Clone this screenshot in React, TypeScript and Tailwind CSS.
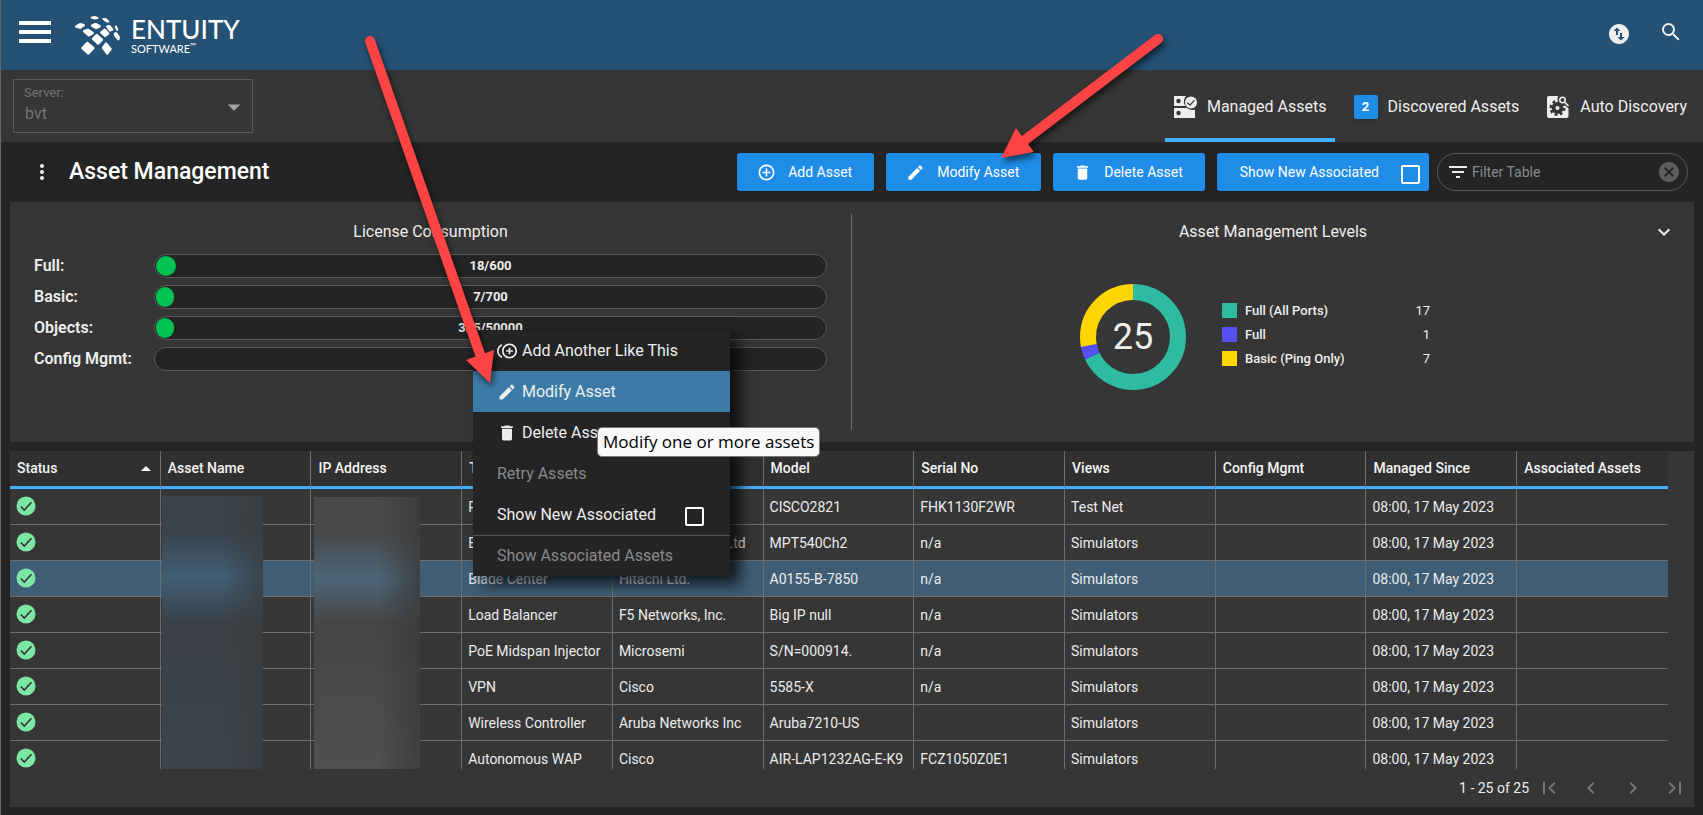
import React from "react";
import {
  MdAddCircleOutline,
  MdArrowDropDown,
  MdArrowDropUp,
  MdCancel,
  MdChevronLeft,
  MdChevronRight,
  MdControlPointDuplicate,
  MdDelete,
  MdEdit,
  MdExpandMore,
  MdFilterList,
  MdFirstPage,
  MdLastPage,
  MdMoreVert,
  MdSearch,
  MdSwapVerticalCircle,
} from "react-icons/md";

function LogoMark() {
  return (
    <svg viewBox="222 42 142 124" className="h-[41px] w-[47px]" aria-hidden="true">
      <g fill="#fff" stroke="#fff" strokeWidth="8" strokeLinejoin="round">
        <path d="M229 77 L240 70 L251 73 L240 80Z" />
        <path d="M275 50 L284 48 L293 51 L285 53Z" strokeWidth="6" />
        <path d="M311 54 L319 55 L326 62 L320 61Z" strokeWidth="6" />
        <path d="M277 74 L287 70 L299 76 L289 81Z" />
        <path d="M253 91 L264 87 L278 97 L267 103Z" />
        <path d="M323 77 L329 76 L337 86 L331 88Z" />
        <path d="M305 95 L315 87 L325 98 L316 105Z" />
        <path d="M347 77 L350 76 L354 87 L352 88Z" strokeWidth="4" />
        <path d="M280 114 L291 103 L306 117 L295 128Z" />
        <path d="M345 98 L350 97 L358 109 L356 116 L346 104Z" strokeWidth="6" />
        <path d="M248 142 L262 127 L280 142 L265 158Z" />
        <path d="M310 141 L319 129 L332 145 L323 158Z" />
      </g>
    </svg>
  );
}

function ManagedIcon() {
  return (
    <svg viewBox="0 0 24 24" className="size-6" aria-hidden="true">
      <path fill="#eee" d="M1 1H13A7.500 7.500 0 0 0 12.500 11H1ZM1 13H14A8 8 0 0 0 22 14.500V23H1Z" />
      <circle cx="5.500" cy="6" r="2.200" fill="#363636" />
      <circle cx="5.500" cy="18" r="2.200" fill="#363636" />
      <circle cx="18" cy="7.500" r="6" fill="#eee" />
      <path d="M14.500 7.800 L17 10.200 L21.500 5.200" fill="none" stroke="#363636" strokeWidth="1.200" />
    </svg>
  );
}

function AutoIcon() {
  return (
    <svg viewBox="0 0 24 24" className="size-6" aria-hidden="true">
      <path
        fill="#eee"
        d="M3 1H12A6 6 0 0 0 18 9.500L22.500 13.500V21A2 2 0 0 1 20.500 23H3A2 2 0 0 1 1 21V3A2 2 0 0 1 3 1Z"
      />
      <circle cx="11.500" cy="13" r="4" fill="none" stroke="#363636" strokeWidth="4" />
      <circle cx="11.500" cy="13" r="6.800" fill="none" stroke="#363636" strokeWidth="2.600" strokeDasharray="2.900 2.440" />
      <circle cx="16.500" cy="5" r="2.700" fill="none" stroke="#eee" strokeWidth="1.500" />
      <path d="M18.500 7 L22.500 11" stroke="#eee" strokeWidth="1.700" />
    </svg>
  );
}

function OkIcon() {
  return (
    <svg viewBox="0 0 20 20" className="size-5" role="img" aria-label="OK">
      <circle cx="10" cy="10" r="9.500" fill="#7ce6a4" />
      <path d="M4.800 10.500 L8.300 14 L15.500 6.200" fill="none" stroke="#363636" strokeWidth="1.600" />
    </svg>
  );
}

const buttonStyle =
  "flex h-[38px] items-center gap-3 rounded-[3px] bg-[#1f8ce8] pr-[22px] pl-5 text-[14px] text-white shadow";

const licenses = [
  { name: "Full", label: "18/600", fill: "w-5" },
  { name: "Basic", label: "7/700", fill: "w-[18px]" },
  { name: "Objects", label: "325/50000", fill: "w-[18px]" },
  { name: "Config Mgmt", label: "", fill: "" },
];

const levels = [
  { name: "Full (All Ports)", count: 17, swatch: "bg-[#2dbba2]", color: "#2dbba2" },
  { name: "Full", count: 1, swatch: "bg-[#5450f4]", color: "#5450f4" },
  { name: "Basic (Ping Only)", count: 7, swatch: "bg-[#ffd603]", color: "#ffd603" },
];

function Donut() {
  const total = levels.reduce((sum, l) => sum + l.count, 0);
  let start = 0;
  return (
    <svg viewBox="0 0 106 106" className="mt-1 size-[106px]" role="img" aria-label="Asset management levels">
      <g transform="rotate(-90 53 53)">
        {levels.map((l) => {
          const offset = start;
          start += l.count;
          return (
            <circle
              key={l.name}
              cx="53"
              cy="53"
              r="45"
              fill="none"
              stroke={l.color}
              strokeWidth="16"
              pathLength={total}
              strokeDasharray={`${l.count} ${total - l.count}`}
              strokeDashoffset={-offset}
            />
          );
        })}
      </g>
      <text x="53" y="65" textAnchor="middle" fontSize="36" fill="#f0f0f0">
        {total}
      </text>
    </svg>
  );
}

const columns = [
  "Status",
  "Asset Name",
  "IP Address",
  "Type",
  "Manufacturer",
  "Model",
  "Serial No",
  "Views",
  "Config Mgmt",
  "Managed Since",
  "Associated Assets",
];

const since = "08:00, 17 May 2023";
const rows = [
  ["Router", "Cisco", "CISCO2821", "FHK1130F2WR", "Test Net"],
  ["Ethernet Switch", "Marconi Comms Ltd", "MPT540Ch2", "n/a", "Simulators"],
  ["Blade Center", "Hitachi Ltd.", "A0155-B-7850", "n/a", "Simulators"],
  ["Load Balancer", "F5 Networks, Inc.", "Big IP null", "n/a", "Simulators"],
  ["PoE Midspan Injector", "Microsemi", "S/N=000914.", "n/a", "Simulators"],
  ["VPN", "Cisco", "5585-X", "n/a", "Simulators"],
  ["Wireless Controller", "Aruba Networks Inc", "Aruba7210-US", "", "Simulators"],
  ["Autonomous WAP", "Cisco", "AIR-LAP1232AG-E-K9", "FCZ1050Z0E1", "Simulators"],
];

function AssetTable() {
  return (
    <div className="relative mr-[26px] min-h-0 flex-1 overflow-hidden">
      <table className="w-full table-fixed border-separate border-spacing-0 text-[14px]">
        <thead>
          <tr className="h-[38px] bg-[#303030] text-left">
            {columns.map((c, i) => (
              <th
                key={c}
                scope="col"
                className="border-r border-b-3 border-r-[#6e6e6e] border-b-[#45b0ff] px-[7px] py-0 font-medium text-[#f4f4f4] last:border-r-0"
              >
                <div className="flex items-center justify-between">
                  {c}
                  {i === 0 && <MdArrowDropUp className="-mr-[5px] size-6" />}
                </div>
              </th>
            ))}
          </tr>
        </thead>
        <tbody>
          {rows.map((r, i) => (
            <tr key={i} className={i === 2 ? "h-9 bg-[#3f5e76]" : "h-9"}>
              {["", "", "", ...r, "", since, ""].map((cell, j) => (
                <td
                  key={j}
                  className="truncate border-r border-b border-[#6e6e6e] px-[6px] pt-[2px] pb-0 text-[#ececec] first:pt-0 first:pb-[2px] last:border-r-0"
                >
                  {j === 0 ? <OkIcon /> : cell}
                </td>
              ))}
            </tr>
          ))}
        </tbody>
      </table>
      <div className="absolute top-[45px] bottom-0 left-[152px] w-[101px] bg-linear-to-b from-[#3a444c] via-[#3b4146] to-[#3a454e]">
        <div className="absolute inset-x-0 top-9 h-[90px] bg-linear-to-b from-transparent via-[#3f5e76] to-transparent" />
        <div className="absolute inset-0 bg-linear-to-r from-transparent from-60% to-[#3a3a3a]/70" />
      </div>
      <div className="absolute top-[46px] bottom-0 left-[304px] w-[106px] bg-linear-to-b from-[#4a4a4a] via-[#464646] to-[#505050]">
        <div className="absolute inset-x-0 top-9 h-[90px] bg-linear-to-b from-transparent via-[#4c6678] to-transparent" />
        <div className="absolute inset-0 bg-linear-to-r from-transparent from-60% to-[#3a3a3a]/80" />
      </div>
    </div>
  );
}

const menuItem = "flex h-[41px] w-full items-center px-6 text-left text-base";

function ContextMenu() {
  return (
    <div
      role="menu"
      className="absolute top-[330px] left-[472px] w-[257px] bg-[#242424] text-[#eee] shadow-[10px_8px_14px_rgba(0,0,0,0.75)]"
    >
      <button role="menuitem" className={menuItem}>
        <span className="w-[25px]"><MdControlPointDuplicate className="size-5" /></span>
        Add Another Like This
      </button>
      <button role="menuitem" className={menuItem + " bg-[#3c7ba8]"}>
        <span className="w-[25px]"><MdEdit className="size-5" /></span>
        Modify Asset
      </button>
      <button role="menuitem" className={menuItem}>
        <span className="w-[25px]"><MdDelete className="size-5" /></span>
        Delete Asset
      </button>
      <button role="menuitem" className={menuItem + " text-[#8a8a8a]"}>Retry Assets</button>
      <label className={menuItem + " justify-between"}>
        Show New Associated
        <input type="checkbox" className="mt-1 mr-0.5 size-[19px] appearance-none rounded-[2px] border-2 border-white" />
      </label>
      <button role="menuitem" className={menuItem + " border-t border-[#555] text-[#8a8a8a]"}>
        Show Associated Assets
      </button>
      <div
        role="tooltip"
        className="absolute top-[97px] left-[124px] rounded-[5px] border border-[#777] bg-[#f9f9fb] px-[5px] font-['Open_Sans',sans-serif] text-[17px] leading-7 whitespace-nowrap text-black"
      >
        Modify one or more assets
      </div>
    </div>
  );
}

function Arrows() {
  return (
    <svg
      viewBox="0 0 1200 400"
      className="pointer-events-none absolute top-0 left-0 h-[400px] w-[1200px] drop-shadow-[2px_4px_3px_rgba(0,0,0,0.6)]"
      aria-hidden="true"
    >
      <g fill="#fd4343" stroke="#fd4343">
        <path d="M369 41 L480 357" strokeWidth="10" strokeLinecap="round" />
        <path d="M465 360 L493 350 L489 383Z" stroke="none" />
        <path d="M1157 39 L1024 140" strokeWidth="10" strokeLinecap="round" />
        <path d="M1015 128 L1033 152 L1000 158Z" stroke="none" />
      </g>
    </svg>
  );
}

const tab = "flex h-full items-center gap-[10px] border-b-4 px-2 pt-[6px] text-base text-[#eee]";

export default function App() {
  return (
    <div className="relative flex h-screen min-h-[600px] flex-col overflow-hidden border-l border-[#666] bg-[#242424] font-[Roboto,sans-serif] text-[#eee]">
      <header className="flex h-[70px] shrink-0 items-center bg-[#255175] pr-5 pl-[18px]">
        <button aria-label="Menu" className="flex w-8 flex-col gap-[5px] pb-[7px]">
          <span className="h-1 w-full bg-white" />
          <span className="h-1 w-full bg-white" />
          <span className="h-1 w-full bg-white" />
        </button>
        <a href="#home" className="ml-[23px] flex items-center gap-[10px] font-[Lato,sans-serif] text-white">
          <LogoMark />
          <span className="flex flex-col pt-1">
            <span className="text-[26px] leading-6 font-medium">ENTUITY</span>
            <span className="text-[11px] leading-4">
              SOFTWARE<sup className="text-[8px]">™</sup>
            </span>
          </span>
        </a>
        <div className="ml-auto flex items-center gap-7 pb-[2px]">
          <button aria-label="Transfers"><MdSwapVerticalCircle className="size-6" /></button>
          <button aria-label="Search" className="pb-1"><MdSearch className="size-6" /></button>
        </div>
      </header>

      <div className="flex h-[72px] shrink-0 items-center justify-between bg-[#363636] pr-2 pl-3">
        <div className="relative h-[54px] w-60 border border-[#5a5a5a] text-[#757575]">
          <label htmlFor="server" className="absolute top-[5px] left-[10px] text-[13px] leading-4">
            Server:
          </label>
          <select
            id="server"
            className="h-full w-full appearance-none bg-transparent pt-4 pl-[11px] text-base outline-none"
          >
            <option>bvt</option>
          </select>
          <MdArrowDropDown className="pointer-events-none absolute top-3 right-[3px] size-[30px] text-[#a5a5a5]" />
        </div>
        <nav className="flex h-full items-center gap-[11px]">
          <button className={tab + " border-[#45b0ff]"}>
            <ManagedIcon />
            Managed Assets
          </button>
          <button className={tab + " border-transparent"}>
            <span className="flex size-6 items-center justify-center rounded-[2px] bg-[#1f8ce8] text-[13px] font-bold text-white shadow-md">
              2
            </span>
            Discovered Assets
          </button>
          <button className={tab + " border-transparent"}>
            <AutoIcon />
            Auto Discovery
          </button>
        </nav>
      </div>

      <div className="flex h-[60px] shrink-0 items-center pr-[15px] pl-[29px]">
        <button aria-label="More"><MdMoreVert className="size-6" /></button>
        <h1 className="ml-[15px] text-[23px] font-medium text-white">Asset Management</h1>
        <div className="ml-auto flex items-center gap-3">
          <button className={buttonStyle}><MdAddCircleOutline className="size-[19px]" />Add Asset</button>
          <button className={buttonStyle}><MdEdit className="size-[19px]" />Modify Asset</button>
          <button className={buttonStyle}><MdDelete className="size-[19px]" />Delete Asset</button>
          <label className="flex h-[38px] items-center gap-[22px] rounded-[3px] bg-[#1f8ce8] pr-[9px] pl-[23px] text-[14px] text-white shadow">
            Show New Associated
            <input type="checkbox" className="mt-1 size-[19px] appearance-none rounded-[2px] border-2 border-white" />
          </label>
          <div className="-ml-1 flex h-[38px] w-[251px] items-center rounded-full border border-[#5a5a5a] pr-[6px] pl-2">
            <MdFilterList className="size-6 shrink-0" />
            <input
              aria-label="Filter Table"
              placeholder="Filter Table"
              className="ml-[2px] min-w-0 flex-1 bg-transparent text-sm outline-none placeholder:text-[#8a8a8a]"
            />
            <button aria-label="Clear filter"><MdCancel className="size-6 text-[#5e5e5e]" /></button>
          </div>
        </div>
      </div>

      <div className="mr-[9px] ml-[9px] flex h-60 shrink-0 bg-[#363636] py-3">
        <section className="flex w-1/2 flex-col border-r border-[#6e6e6e] px-6">
          <h2 className="pt-[6px] text-center text-base">License Consumption</h2>
          <div className="mt-[10px] flex flex-col gap-[7px]">
            {licenses.map((l) => (
              <div key={l.name} className="flex h-6 items-center">
                <span className="w-30 text-base font-semibold">{l.name}:</span>
                <div className="relative flex h-6 flex-1 items-center justify-center rounded-full border border-[#5a5a5a] bg-[#242424] text-[13px] font-bold">
                  {l.fill && <span className={l.fill + " absolute top-px left-px h-5 rounded-full bg-[#00c250]"} />}
                  {l.label}
                </div>
              </div>
            ))}
          </div>
        </section>
        <section className="relative flex w-1/2 flex-col">
          <h2 className="pt-[6px] text-center text-base">Asset Management Levels</h2>
          <button aria-label="Collapse" className="absolute top-[6px] right-[18px]"><MdExpandMore className="size-6" /></button>
          <div className="mr-9 flex flex-1 items-center justify-center gap-9 pb-[5px]">
            <Donut />
            <ul className="flex w-[208px] flex-col text-[13px] leading-6">
              {levels.map((l) => (
                <li key={l.name} className="flex items-center">
                  <span className={l.swatch + " size-[15px]"} />
                  <span className="ml-2 flex-1 font-medium">{l.name}</span>
                  <span>{l.count}</span>
                </li>
              ))}
            </ul>
          </div>
        </section>
      </div>

      <main className="m-[9px] mb-2 flex min-h-0 flex-1 flex-col bg-[#363636]">
        <AssetTable />
        <footer className="flex h-[38px] shrink-0 items-center justify-end pr-[7px] text-sm">
          1 - 25 of 25
          <div className="ml-2 flex gap-[18px] text-[#757575]">
            <button aria-label="First page"><MdFirstPage className="size-6" /></button>
            <button aria-label="Previous page"><MdChevronLeft className="size-6" /></button>
            <button aria-label="Next page"><MdChevronRight className="size-6" /></button>
            <button aria-label="Last page"><MdLastPage className="size-6" /></button>
          </div>
        </footer>
      </main>

      <ContextMenu />
      <Arrows />
    </div>
  );
}
